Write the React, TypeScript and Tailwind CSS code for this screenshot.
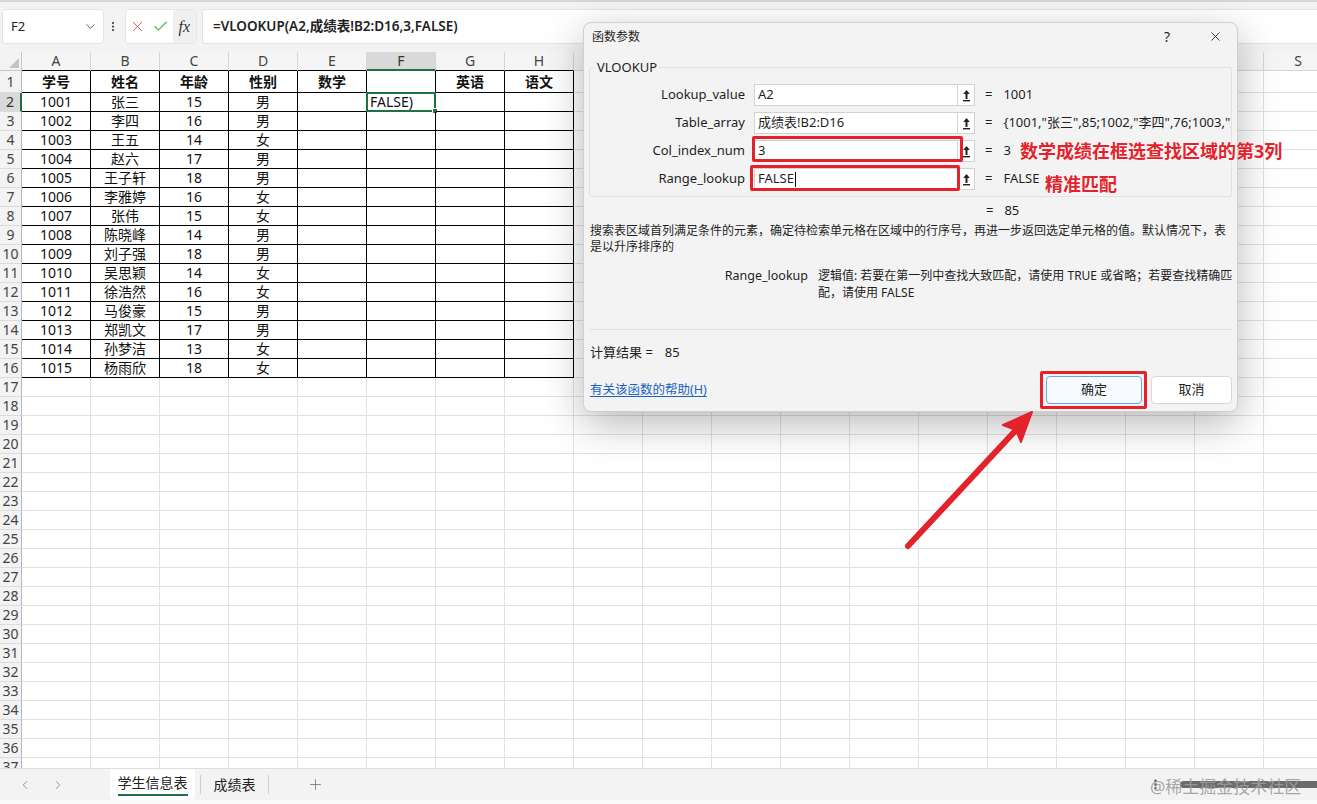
import { Check, ChevronDown, ChevronLeft, ChevronRight, EllipsisVertical, Plus, X } from "lucide-react";

const COLS = "ABCDEFGHIJKLMNOPQRS".split("");
const HEAD = ["学号", "姓名", "年龄", "性别", "数学", "", "英语", "语文"];
const DATA = [
  ["1001", "张三", "15", "男"],
  ["1002", "李四", "16", "男"],
  ["1003", "王五", "14", "女"],
  ["1004", "赵六", "17", "男"],
  ["1005", "王子轩", "18", "男"],
  ["1006", "李雅婷", "16", "女"],
  ["1007", "张伟", "15", "女"],
  ["1008", "陈晓峰", "14", "男"],
  ["1009", "刘子强", "18", "男"],
  ["1010", "吴思颖", "14", "女"],
  ["1011", "徐浩然", "16", "女"],
  ["1012", "马俊豪", "15", "男"],
  ["1013", "郑凯文", "17", "男"],
  ["1014", "孙梦洁", "13", "女"],
  ["1015", "杨雨欣", "18", "女"],
];
const ROWS = Array.from({ length: 37 }, (_, i) => i + 1);

function RefIcon() {
  return (
    <svg width="9" height="13" viewBox="0 0 9 13">
      <path d="M4.5 1 L1.2 5 H3.5 V10 H5.5 V5 H7.8 Z" fill="#222" />
      <rect x="1" y="11" width="7" height="1.4" fill="#222" />
    </svg>
  );
}

function ColumnHeader() {
  return (
    <div className="flex h-[19px] shrink-0">
      <div className="relative w-[22px] shrink-0 border-r border-b border-[#c8c8c8] bg-[#f3f3f3]">
        <svg className="absolute right-[2px] bottom-[2px]" width="10" height="10" viewBox="0 0 10 10">
          <path d="M10 0 V10 H0 Z" fill="#c4c4c4" />
        </svg>
      </div>
      {COLS.map((c, ci) => (
        <div
          key={c}
          className={`flex w-[69px] shrink-0 items-center justify-center border-r text-[14px] leading-none ${
            ci === 5
              ? "border-b-2 border-r-[#d6d6d6] border-b-[#1e7145] bg-[#d9d9d9] text-[#333]"
              : ci <= 7
              ? "border-b border-r-[#d6d6d6] border-b-black bg-[#f5f5f5] text-[#444]"
              : "border-b border-[#d6d6d6] bg-[#f5f5f5] text-[#444]"
          }`}
        >
          {c}
        </div>
      ))}
    </div>
  );
}

function SheetRow({ row }: { row: number }) {
  const values = row === 1 ? HEAD : row <= 16 ? DATA[row - 2] : [];
  return (
    <div className={`flex shrink-0 ${row === 1 ? "h-[22px]" : "h-[19px]"}`}>
      <div
        className={`flex w-[22px] shrink-0 items-center justify-center border-b border-[#dcdcdc] text-[14px] leading-none ${
          row === 2
            ? "border-r-2 border-r-[#1e7145] bg-[#d9d9d9] text-[#333]"
            : "border-r border-r-[#b8b8b8] bg-[#f3f3f3] text-[#444]"
        }`}
      >
        {row}
      </div>
      {COLS.map((c, ci) => {
        const inTable = row <= 16 && ci <= 7;
        const selected = row === 2 && ci === 5;
        return (
          <div
            key={c}
            className={`relative flex w-[69px] shrink-0 items-center border-r border-b text-[14px] leading-none text-[#111] ${
              inTable ? "border-black" : "border-[#e1e1e1]"
            } ${row === 1 ? "font-bold" : ""} ${selected ? "justify-start pl-[3px]" : "justify-center"}`}
          >
            {selected ? "FALSE)" : values[ci] ?? ""}
            {selected && (
              <div className="absolute -left-[1px] -top-[1px] h-[20px] w-[70px] border-2 border-[#1e7145]">
                <div className="absolute -right-[4px] -bottom-[4px] h-[6px] w-[6px] border border-white bg-[#1e7145]" />
              </div>
            )}
          </div>
        );
      })}
    </div>
  );
}

function ArgRow({ label, value, result, caret }: { label: string; value: string; result: string; caret?: boolean }) {
  return (
    <div className="flex h-[22px] min-w-0 items-center text-[13px] text-[#1f1f1f]">
      <div className="w-[155px] shrink-0 text-right">{label}</div>
      <div className="ml-[9px] flex h-[22px] w-[221px] shrink-0 border border-[#d2d2d2] bg-white">
        <div className="flex flex-1 items-center overflow-hidden whitespace-nowrap pl-[3px]">
          {value}
          {caret && <span className="ml-[1px] inline-block h-[15px] w-px bg-black" />}
        </div>
        <div className="flex w-[17px] items-center justify-center border-l border-[#d2d2d2]">
          <RefIcon />
        </div>
      </div>
      <div className="ml-[10px] shrink-0">=</div>
      <div className="ml-[11px] min-w-0 flex-1 overflow-hidden whitespace-nowrap">{result}</div>
    </div>
  );
}

function Dialog() {
  return (
    <div className="absolute left-[583px] top-[22px] flex h-[390px] w-[655px] flex-col rounded-[8px] border border-[#cfcfcf] bg-[#f3f3f3] text-[#1f1f1f] shadow-[0_12px_40px_rgba(0,0,0,0.28)]">
      <div className="flex h-[27px] shrink-0 items-center pl-[8px] pr-[14px] text-[12px]">
        <span>函数参数</span>
        <span className="ml-auto mr-[38px] text-[14px]">?</span>
        <X size={15} strokeWidth={1.4} />
      </div>

      <fieldset className="mx-[5px] mt-[8px] min-w-0 shrink-0 overflow-hidden rounded-[3px] border border-[#e2e2e2] px-0 pb-[6px]">
        <legend className="ml-[5px] px-[2px] text-[13px] leading-[18px]">VLOOKUP</legend>
        <div className="flex min-w-0 flex-col gap-[6px] pt-[8px]">
          <ArgRow label="Lookup_value" value="A2" result="1001" />
          <ArgRow
            label="Table_array"
            value="成绩表!B2:D16"
            result={'{1001,"张三",85;1002,"李四",76;1003,"王五",90;1004,"赵六",88}'}
          />
          <ArgRow label="Col_index_num" value="3" result="3" />
          <ArgRow label="Range_lookup" value="FALSE" result="FALSE" caret />
        </div>
      </fieldset>

      <div className="mt-[5px] flex h-[18px] shrink-0 items-center pl-[402px] text-[13px]">
        <span>=</span>
        <span className="ml-[11px]">85</span>
      </div>

      <div className="mt-[3px] shrink-0 px-[6px] text-[12px] leading-[16px] whitespace-nowrap">
        <div>搜索表区域首列满足条件的元素，确定待检索单元格在区域中的行序号，再进一步返回选定单元格的值。默认情况下，表</div>
        <div>是以升序排序的</div>
      </div>

      <div className="mt-[12px] flex shrink-0 px-[6px] text-[12px] leading-[17px]">
        <div className="w-[218px] shrink-0 text-right text-[12.5px]">Range_lookup</div>
        <div className="ml-[10px] whitespace-nowrap">
          <div>逻辑值: 若要在第一列中查找大致匹配，请使用 TRUE 或省略；若要查找精确匹</div>
          <div>配，请使用 FALSE</div>
        </div>
      </div>

      <div className="mx-[6px] mt-[28px] h-px shrink-0 bg-[#e0e0e0]" />

      <div className="mt-[14px] flex h-[18px] shrink-0 items-center px-[6px] text-[13px]">
        <span>计算结果 =</span>
        <span className="ml-[12px]">85</span>
      </div>

      <div className="mt-[14px] flex h-[28px] shrink-0 items-center pl-[6px] pr-[5px]">
        <span className="text-[12.5px] text-[#1a64c0] underline underline-offset-2">有关该函数的帮助(H)</span>
        <button className="ml-auto h-[28px] w-[96px] rounded-[4px] border border-[#6aa3e8] bg-[#f7faff] text-[13px]">确定</button>
        <button className="ml-[9px] h-[28px] w-[81px] rounded-[4px] border border-[#d8d8d8] bg-white text-[13px]">取消</button>
      </div>

      {/* red marks over the inputs */}
      <div className="absolute left-[168px] top-[113px] h-[26px] w-[211px] rounded-[2px] border-[3px] border-[#e3232b]" />
      <div className="absolute left-[166px] top-[142px] h-[26px] w-[210px] rounded-[2px] border-[3px] border-[#e3232b]" />
    </div>
  );
}

export default function App() {
  return (
    <div className="relative flex h-[804px] w-[1317px] flex-col overflow-hidden bg-white font-['Noto_Sans','Noto_Sans_CJK_SC',sans-serif]">
      {/* formula bar */}
      <div className="flex h-[52px] shrink-0 items-start border-t-2 border-[#d6d6d6] bg-[#f3f3f3] pt-[7px]">
        <div className="ml-[2px] flex h-[35px] w-[102px] items-center rounded-[4px] border border-[#e4e4e4] bg-white pl-[8px] pr-[5px] text-[13px] text-[#222]">
          <span>F2</span>
          <ChevronDown className="ml-auto text-[#555]" size={15} strokeWidth={1.5} />
        </div>
        <div className="ml-[3px] flex h-[35px] w-[12px] items-center justify-center text-[#444]">
          <EllipsisVertical size={15} strokeWidth={2.5} />
        </div>
        <div className="ml-[6px] flex h-[35px] w-[72px] overflow-hidden rounded-[4px] border border-[#e4e4e4] bg-white">
          <div className="flex w-[24px] items-center justify-center text-[#d9534f]">
            <X size={17} strokeWidth={1.3} />
          </div>
          <div className="flex w-[24px] items-center justify-center text-[#4caf50]">
            <Check size={17} strokeWidth={1.5} />
          </div>
          <div className="flex w-[24px] items-center justify-center bg-[#f0f0f0] font-['Liberation_Serif',serif] text-[16px] italic text-[#333]">
            fx
          </div>
        </div>
        <div className="ml-[5px] flex h-[35px] flex-1 items-center rounded-l-[4px] border border-r-0 border-[#e4e4e4] bg-white pl-[10px] text-[13.5px] font-semibold text-[#222]">
          =VLOOKUP(A2,成绩表!B2:D16,3,FALSE)
        </div>
      </div>

      {/* grid */}
      <div className="flex min-h-0 flex-1 flex-col overflow-hidden">
        <ColumnHeader />
        {ROWS.map((r) => (
          <SheetRow key={r} row={r} />
        ))}
      </div>

      {/* sheet tabs */}
      <div className="flex h-[32px] shrink-0 items-stretch border-t border-[#dedede] bg-[#f3f3f3]">
        <div className="flex w-[110px] items-center gap-[19px] pl-[18px] text-[#8a8a8a]">
          <ChevronLeft size={14} strokeWidth={1.5} />
          <ChevronRight size={14} strokeWidth={1.5} />
        </div>
        <div className="flex w-[85px] flex-col items-center rounded-b-[4px] bg-white pt-[4px]">
          <span className="border-b-2 border-[#1e7145] pb-[1px] text-[14px] leading-[20px] text-[#222]">学生信息表</span>
        </div>
        <div className="my-[6px] ml-[5px] w-px bg-[#cfcfcf]" />
        <div className="flex w-[67px] items-center justify-center text-[14px] text-[#222]">成绩表</div>
        <div className="my-[6px] w-px bg-[#cfcfcf]" />
        <div className="ml-[38px] flex items-center text-[#777]">
          <Plus size={17} strokeWidth={1.2} />
        </div>
        <div className="ml-auto flex items-center">
          <EllipsisVertical className="text-[#444]" size={13} strokeWidth={2.5} />
          <div className="ml-[18px] h-[7px] w-[137px] rounded-l-full bg-[#6b6b6b]" />
        </div>
      </div>
      <div className="h-[4px] shrink-0 bg-[#fafafa]" />

      <Dialog />

      {/* annotations */}
      <div className="absolute left-[1020px] top-[139px] text-[18px] font-bold leading-[24px] text-[#e3232b] [text-shadow:0_0_2px_#fff]">
        数学成绩在框选查找区域的第3列
      </div>
      <div className="absolute left-[1045px] top-[172px] text-[18px] font-bold leading-[24px] text-[#e3232b] [text-shadow:0_0_2px_#fff]">
        精准匹配
      </div>
      <div className="absolute left-[1040px] top-[371px] h-[38px] w-[107px] rounded-[2px] border-[3px] border-[#e3232b]" />
      <svg className="absolute left-0 top-0" width="1317" height="804" viewBox="0 0 1317 804" pointerEvents="none">
        <line x1="908" y1="546" x2="1016" y2="430" stroke="#e3232b" strokeWidth="6" strokeLinecap="round" />
        <path d="M1032 412 L1003 425 L1016 430 L1021 442 Z" fill="#e3232b" stroke="#e3232b" strokeWidth="2" strokeLinejoin="round" />
      </svg>
      <div className="absolute left-[1150px] top-[775px] text-[17px] leading-[24px] text-[#9d9d9d]/90">@稀土掘金技术社区</div>
    </div>
  );
}
